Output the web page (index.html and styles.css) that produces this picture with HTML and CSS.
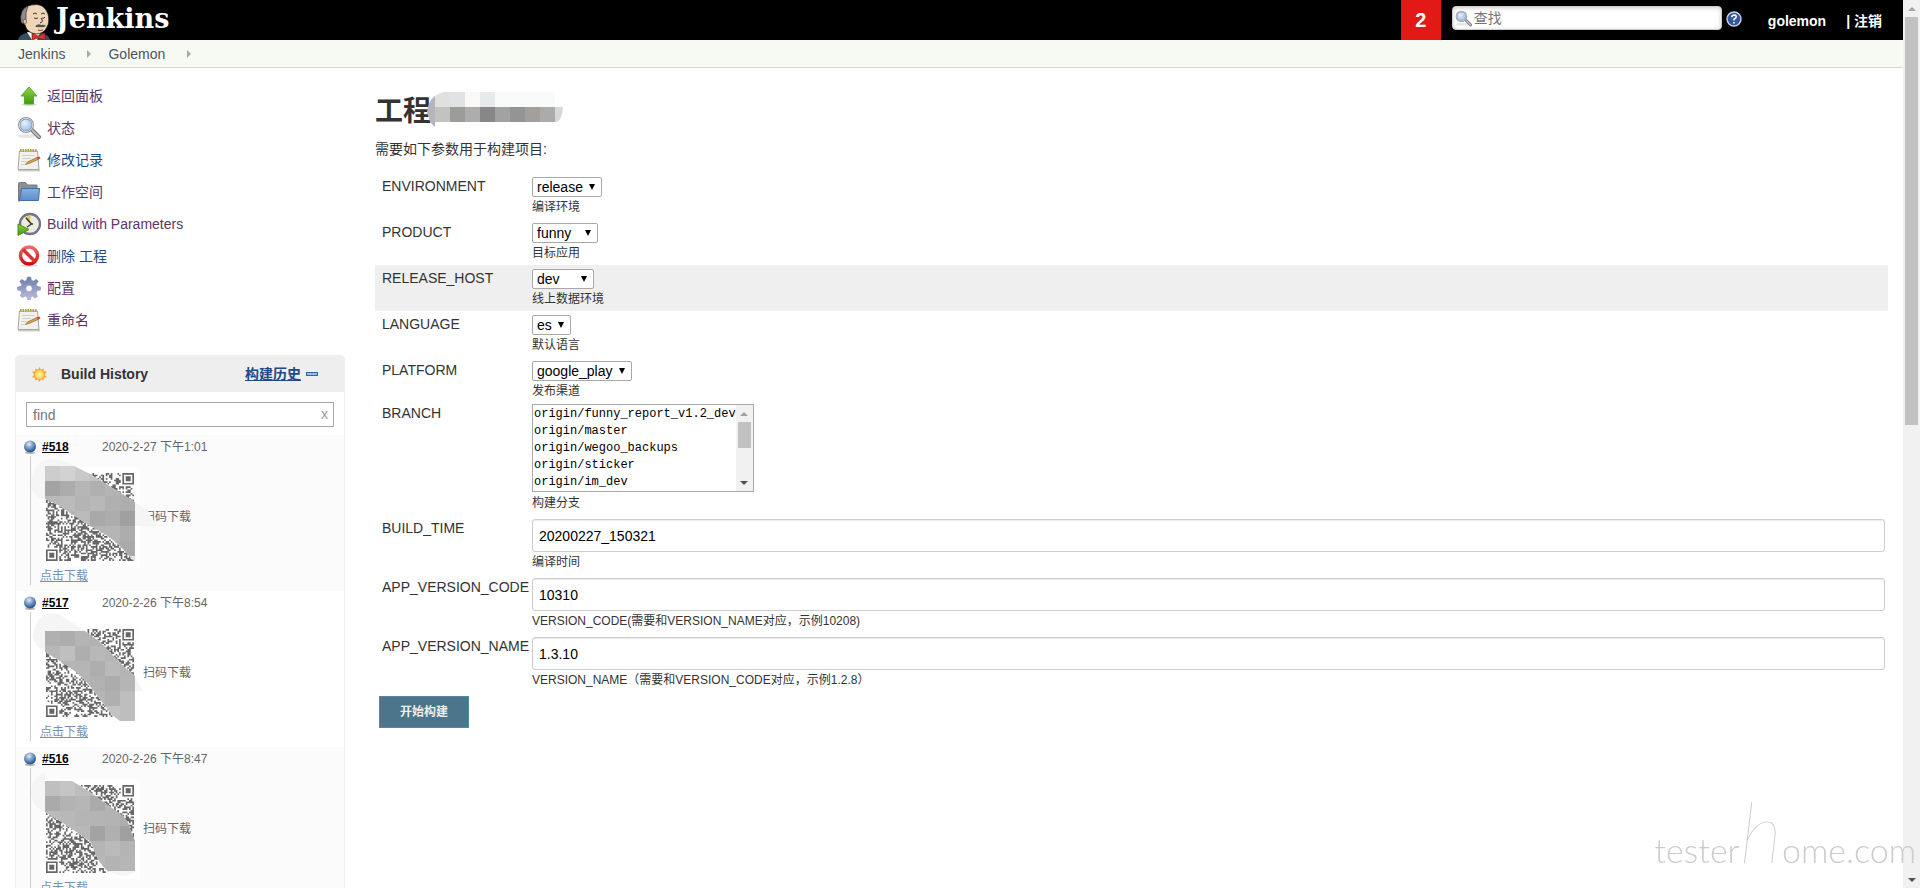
FILE: index.html
```html
<!DOCTYPE html>
<html lang="zh-Hans">
<head>
  <meta charset="UTF-8">
  <meta name="viewport" content="width=device-width, initial-scale=1.0">
  <title>Golemon [Jenkins]</title>
  <link rel="stylesheet" href="styles.css">
</head>
<body>
  <svg class="defs" aria-hidden="true">
    <defs>
      <linearGradient id="g-green" x1="0" y1="0" x2="0" y2="1"><stop offset="0" stop-color="#8fd44a"/><stop offset="1" stop-color="#3f9a06"/></linearGradient>
      <linearGradient id="g-blue" x1="0" y1="0" x2="0" y2="1"><stop offset="0" stop-color="#8ab1de"/><stop offset="1" stop-color="#5d8dc9"/></linearGradient>
      <linearGradient id="g-red" x1="0" y1="0" x2="0" y2="1"><stop offset="0" stop-color="#ef6b6b"/><stop offset="1" stop-color="#cc0c0c"/></linearGradient>
      <linearGradient id="g-gear" x1="0" y1="0" x2="0" y2="1"><stop offset="0" stop-color="#657ca6"/><stop offset="1" stop-color="#c0bbdf"/></linearGradient>
      <radialGradient id="g-lens" cx=".4" cy=".35" r=".7"><stop offset="0" stop-color="#e8f3ff"/><stop offset="1" stop-color="#8cb8e8"/></radialGradient>
      <radialGradient id="g-ball" cx=".42" cy=".3" r=".7"><stop offset="0" stop-color="#e4ebf2"/><stop offset=".45" stop-color="#7d9fc6"/><stop offset="1" stop-color="#1d4c8c"/></radialGradient>
      <radialGradient id="g-sun"><stop offset="0" stop-color="#fff7a0"/><stop offset="1" stop-color="#fcd34a"/></radialGradient>
    </defs>
    <symbol id="i-up" viewBox="0 0 24 24">
      <ellipse cx="12" cy="20.500" rx="8" ry="1.500" fill="#ddd"/>
      <path d="M12 3 20 12H16.500V20H7.500V12H4Z" fill="url(#g-green)" stroke="#5aa82a"/>
    </symbol>
    <symbol id="i-search" viewBox="0 0 24 24">
      <ellipse cx="10" cy="20" rx="9" ry="2" fill="#e6e6e6"/>
      <path d="M15 14 22 21" stroke="#777" stroke-width="4" stroke-linecap="round"/>
      <path d="M15 14 22 21" stroke="#bbb" stroke-width="2" stroke-linecap="round"/>
      <circle cx="9" cy="9" r="6.800" fill="url(#g-lens)" stroke="#8a929c" stroke-width="2.400"/>
      <circle cx="9" cy="9" r="6.700" fill="none" stroke="#d5dbe2"/>
    </symbol>
    <symbol id="i-note" viewBox="0 0 24 24">
      <path d="M1 22.500H23" stroke="#ccc" stroke-width="2"/>
      <path d="M2.500 3H20.500L22 21.500H1Z" fill="#f1f1ee" stroke="#a5a59e"/>
      <path d="M3 2.500H20" stroke="#b3a24a" stroke-width="3" stroke-dasharray="1.500 1"/>
      <path d="M5 7.500H18M5 10.500H14M4 13.500H10M4 16.500H8" stroke="#d0d0cd"/>
      <path d="M8.500 16.500 10.500 14 20 9.500 21 11.500 12 15.500Z" fill="#d8a34c" stroke="#8d6a25" stroke-width=".700"/>
      <path d="M19.500 9.500 22.500 8.500 23.500 10.500 20.800 11.500Z" fill="#e0412f"/>
    </symbol>
    <symbol id="i-folder" viewBox="0 0 24 24">
      <path d="M1.500 21V3.500Q1.500 2.500 2.500 2.500H8.500L10.500 5H20V10H4L3 21Z" fill="#8f8f8f" stroke="#7a7a7a"/>
      <path d="M4.500 8.500H22.500L21.500 20.500H2.500Z" fill="url(#g-blue)" stroke="#3f6ea9"/>
    </symbol>
    <symbol id="i-clock" viewBox="0 0 24 24">
      <circle cx="13" cy="12" r="10" fill="#ececdf" stroke="#74738c" stroke-width="2.400"/>
      <path d="M13 12 8 5.500Q10.500 4 13.500 4Z" fill="#d9c04a"/>
      <path d="M9 6 14.500 12 10 15M14 12H16" fill="none" stroke="#333" stroke-width="1.300"/>
      <path d="M1 12 12 17.500 1 23.500Z" fill="url(#g-green)" stroke="#468f18"/>
    </symbol>
    <symbol id="i-stop" viewBox="0 0 24 24">
      <ellipse cx="12" cy="21.500" rx="9" ry="1.500" fill="#ddd"/>
      <circle cx="12" cy="11.500" r="8.500" fill="#fff" stroke="url(#g-red)" stroke-width="3.400"/>
      <path d="M6 5.500 18 17.500" stroke="#dd3030" stroke-width="3.400"/>
    </symbol>
    <symbol id="i-gear" viewBox="0 0 24 24">
      <path fill="url(#g-gear)" stroke="#8c93bb" stroke-width=".600" fill-rule="evenodd" d="M10.300 1H13.700L14.400 4.300 16.500 5.100 19.300 3.200 21.300 5.500 19.300 8.300 20 10.300 23.500 11V14L20 14.700 19 17 20.500 20.500 18 22 15.500 20 14 20.500 13.400 23.500H10.600L10 20.500 8.200 20 5.500 21.500 3.300 20 4.800 17 4 14.700.500 14V11L4 10.300 4.700 8.300 2.700 5.500 4.700 3.200 7.500 5.100 9.600 4.300ZM12 9.300A3.200 3.200 0 1 0 12 15.700 3.200 3.200 0 1 0 12 9.300Z"/>
    </symbol>
    <symbol id="i-ball" viewBox="0 0 14 14">
      <ellipse cx="7" cy="12.500" rx="5" ry="1.500" fill="#bbb"/>
      <circle cx="7" cy="6.500" r="6" fill="url(#g-ball)"/>
    </symbol>
  </svg>

  <div class="page">
    <header class="header">
      <a class="logo" href="#">
        <svg class="butler" viewBox="0 0 32 36" aria-hidden="true">
          <path d="M0 36Q1 31 8 29L24 29Q31 31 32 36Z" fill="#335061"/>
          <path d="M9 28 14 36H19L22 29Z" fill="#fff"/>
          <path d="M5 17Q1 3 13 1 26-2 30 10 32 18 29 23 26 30 18 30 9 29 7 21Z" fill="#f0d6b7" stroke="#222" stroke-width=".800"/>
          <path d="M3 18Q1 6 10 2L8 9 8 17 5 20Z" fill="#8b8d90" stroke="#222" stroke-width=".600"/>
          <path d="M5 16Q8 14 8.500 18 8 21 6 20Z" fill="#e8c6a3" stroke="#222" stroke-width=".500"/>
          <path d="M15 10Q17 8 19 10M23 10Q25 8 27 10M16 14Q18 15 20 14M24 14Q26 15 27 13M23 14Q26 18 22 19" fill="none" stroke="#222" stroke-width=".900"/>
          <path d="M17 22Q21 19 23 21 26 20 28 22 25 24 22 23 19 24 17 22Z" fill="#555"/>
          <path d="M20 26Q22 27 25 26" fill="none" stroke="#7a3b2b"/>
          <path d="M14 29 20 32 27 29 27 36 20 34 14 36Z" fill="#d33833" stroke="#6d1313" stroke-width=".600"/>
        </svg>
        <span class="logo-text">Jenkins</span>
      </a>
      <a class="alert-count" href="#">2</a>
      <form class="search" role="search">
        <svg class="search-icon" aria-hidden="true"><use href="#i-search"/></svg>
        <input class="search-input" type="text" placeholder="查找" aria-label="查找">
      </form>
      <a class="help" href="#" aria-label="帮助">
        <svg viewBox="0 0 16 16" width="16" height="16">
          <circle cx="8" cy="8" r="7" fill="#34589c" stroke="#c8d3e6" stroke-width="1.400"/>
          <path d="M5.800 6.200Q6 4 8.200 4 10.300 4.200 10.200 6 10 7.300 8 8.200V9.500M8 10.900V12.500" fill="none" stroke="#fff" stroke-width="1.600"/>
        </svg>
      </a>
      <a class="user" href="#">golemon</a>
      <span class="logout">| <a href="#">注销</a></span>
    </header>

    <nav class="breadcrumb">
      <a href="#">Jenkins</a><span class="crumb-arrow"></span>
      <a href="#">Golemon</a><span class="crumb-arrow"></span>
    </nav>

    <div class="content">
      <aside class="sidebar">
        <nav class="tasks">
          <a class="task visited" href="#"><svg><use href="#i-up"/></svg>返回面板</a>
          <a class="task visited" href="#"><svg><use href="#i-search"/></svg>状态</a>
          <a class="task" href="#"><svg><use href="#i-note"/></svg>修改记录</a>
          <a class="task visited" href="#"><svg><use href="#i-folder"/></svg>工作空间</a>
          <a class="task visited" href="#"><svg><use href="#i-clock"/></svg>Build with Parameters</a>
          <a class="task" href="#"><svg><use href="#i-stop"/></svg>删除 工程</a>
          <a class="task visited" href="#"><svg><use href="#i-gear"/></svg>配置</a>
          <a class="task visited" href="#"><svg><use href="#i-note"/></svg>重命名</a>
        </nav>

        <section class="history">
          <div class="history-head">
            <svg class="sun" viewBox="0 0 16 16" aria-hidden="true">
              <path d="M8 0 9.500 3 12.500 1.500 12.500 4.500 16 5 13.500 8 16 11 12.500 11.500 12.500 14.500 9.500 13 8 16 6.500 13 3.500 14.500 3.500 11.500 0 11 2.500 8 0 5 3.500 4.500 3.500 1.500 6.500 3Z" fill="#f5a43c"/>
              <circle cx="8" cy="8" r="4.800" fill="url(#g-sun)"/>
            </svg>
            <strong>Build History</strong>
            <a class="trend" href="#">构建历史</a>
            <span class="collapse"></span>
          </div>
          <div class="find">
            <input class="find-input" type="text" placeholder="find" aria-label="find">
            <button class="find-clear" type="button">x</button>
          </div>

          <article class="build">
            <div class="build-head">
              <svg class="ball"><use href="#i-ball"/></svg>
              <a class="build-no" href="#">#518</a>
              <span>2020-2-27 下午1:01</span>
            </div>
            <div class="build-body">
              <div class="scan"><svg class="qr" viewBox="0 0 100 100" data-index="0"></svg>扫码下载</div>
              <a class="download" href="#">点击下载</a>
            </div>
          </article>
          <article class="build">
            <div class="build-head">
              <svg class="ball"><use href="#i-ball"/></svg>
              <a class="build-no" href="#">#517</a>
              <span>2020-2-26 下午8:54</span>
            </div>
            <div class="build-body">
              <div class="scan"><svg class="qr" viewBox="0 0 100 100" data-index="1"></svg>扫码下载</div>
              <a class="download" href="#">点击下载</a>
            </div>
          </article>
          <article class="build">
            <div class="build-head">
              <svg class="ball"><use href="#i-ball"/></svg>
              <a class="build-no" href="#">#516</a>
              <span>2020-2-26 下午8:47</span>
            </div>
            <div class="build-body">
              <div class="scan"><svg class="qr" viewBox="0 0 100 100" data-index="2"></svg>扫码下载</div>
              <a class="download" href="#">点击下载</a>
            </div>
          </article>
        </section>
      </aside>

      <main class="main">
        <h1 class="title">工程<svg class="title-mask" viewBox="0 0 136 36" aria-hidden="true">
          <clipPath id="mask-title"><path d="M0 20Q2 3 17 0H128V15H136Q135 28 130 30H8V35L3 30Z"/></clipPath>
          <g clip-path="url(#mask-title)">
            <path d="M0 0H8V36H0Z" fill="#b4b4bc"/>
            <path d="M8 0H23V15H8Z" fill="#e0e0de"/><path d="M23 0H38V15H23Z" fill="#e0e2e4"/><path d="M38 0H53V15H38Z" fill="#faf9f8"/><path d="M53 0H68V15H53Z" fill="#e7eaea"/><path d="M68 0H128V15H68Z" fill="#f9fafa"/>
            <path d="M8 15H23V30H8Z" fill="#c3c2c0"/><path d="M23 15H38V30H23Z" fill="#9d9c98"/><path d="M38 15H53V30H38Z" fill="#abaead"/><path d="M53 15H68V30H53Z" fill="#878787"/><path d="M68 15H83V30H68Z" fill="#a0a2a4"/><path d="M83 15H98V30H83Z" fill="#949494"/><path d="M98 15H113V30H98Z" fill="#a39f9b"/><path d="M113 15H128V30H113Z" fill="#adaaab"/><path d="M128 15H136V30H128Z" fill="#d5d8dd"/>
          </g>
        </svg></h1>
        <p class="intro">需要如下参数用于构建项目:</p>

        <form class="params" onsubmit="return false">
          <div class="param">
            <label for="environment">ENVIRONMENT</label>
            <div class="value">
              <span class="drop"><select id="environment"><option>release</option></select></span>
              <div class="desc">编译环境</div>
            </div>
          </div>
          <div class="param">
            <label for="product">PRODUCT</label>
            <div class="value">
              <span class="drop drop-funny"><select id="product"><option>funny</option></select></span>
              <div class="desc">目标应用</div>
            </div>
          </div>
          <div class="param hover">
            <label for="release-host">RELEASE_HOST</label>
            <div class="value">
              <span class="drop drop-dev"><select id="release-host"><option>dev</option></select></span>
              <div class="desc">线上数据环境</div>
            </div>
          </div>
          <div class="param">
            <label for="language">LANGUAGE</label>
            <div class="value">
              <span class="drop"><select id="language"><option>es</option></select></span>
              <div class="desc">默认语言</div>
            </div>
          </div>
          <div class="param">
            <label for="platform">PLATFORM</label>
            <div class="value">
              <span class="drop"><select id="platform"><option>google_play</option></select></span>
              <div class="desc">发布渠道</div>
            </div>
          </div>
          <div class="param wide">
            <label for="branch">BRANCH</label>
            <div class="value">
              <div class="listbox">
                <select id="branch" size="5">
                  <option>origin/funny_report_v1.2_dev</option>
                  <option>origin/master</option>
                  <option>origin/wegoo_backups</option>
                  <option>origin/sticker</option>
                  <option>origin/im_dev</option>
                </select>
                <div class="scrollbar"><i class="arrow-up"></i><i class="thumb thumb-short"></i><i class="arrow-down"></i></div>
              </div>
              <div class="desc">构建分支</div>
            </div>
          </div>
          <div class="param wide">
            <label for="build-time">BUILD_TIME</label>
            <div class="value">
              <input id="build-time" type="text" value="20200227_150321">
              <div class="desc">编译时间</div>
            </div>
          </div>
          <div class="param wide">
            <label for="version-code">APP_VERSION_CODE</label>
            <div class="value">
              <input id="version-code" type="text" value="10310">
              <div class="desc">VERSION_CODE(需要和VERSION_NAME对应，示例10208)</div>
            </div>
          </div>
          <div class="param wide">
            <label for="version-name">APP_VERSION_NAME</label>
            <div class="value">
              <input id="version-name" type="text" value="1.3.10">
              <div class="desc">VERSION_NAME（需要和VERSION_CODE对应，示例1.2.8）</div>
            </div>
          </div>
          <button class="btn-build" type="submit">开始构建</button>
        </form>
      </main>
    </div>
  </div>

  <div class="scrollbar"><i class="arrow-up"></i><i class="thumb"></i><i class="arrow-down"></i></div>
  <div class="watermark">tester<span class="tall">h</span>ome.com</div>

  <script src="qr.js"></script>
</body>
</html>
```
FILE: styles.css
```css
/***----BASIC----***/
* {
  box-sizing: border-box;
}
body {
  margin: 0;
  height: 100vh;
  overflow: hidden;
  display: flex;
  background: #fff;
  color: #333;
  font: 14px/18px "Liberation Sans", "Noto Sans CJK SC", sans-serif;
}
a {
  color: #204a87;
}
input,
select,
button {
  font: inherit;
  margin: 0;
}
.defs {
  position: absolute;
  width: 0;
  height: 0;
}
.page {
  flex: 1;
  min-width: 0;
  overflow: hidden;
}

/***----Header----***/
.header {
  display: flex;
  align-items: flex-start;
  height: 40px;
  padding-right: 21px;
  background: #000;
  color: #fff;
}
.header a {
  color: #fff;
  text-decoration: none;
}
.logo {
  display: flex;
  flex: 1;
  padding-left: 18px;
  gap: 6px;
}
.butler {
  width: 32px;
  height: 36px;
  margin-top: 4px;
}
.logo-text {
  font: bold 27px/38px "DejaVu Serif", serif;
}
.alert-count {
  width: 40px;
  background: #e31918;
  font-size: 20px;
  font-weight: bold;
  line-height: 40px;
  text-align: center;
}
.search {
  position: relative;
  margin: 6px 4px 0 11px;
}
.search-icon {
  position: absolute;
  left: 3px;
  top: 4px;
  width: 17px;
  height: 17px;
}
.search-input {
  display: block;
  width: 270px;
  height: 24px;
  padding: 0 4px 0 21px;
  border: 1px solid #ccc;
  border-radius: 4px;
  box-shadow: inset 0 1px 4px #ccc;
}
.search-input::placeholder,
.find-input::placeholder {
  color: #757575;
}
.help {
  margin-top: 11px;
  height: 16px;
}
.user,
.logout {
  margin-top: 12px;
  font-weight: bold;
}
.user {
  margin: 12px 20px 0 26px;
}

/***----Breadcrumb----***/
.breadcrumb {
  display: flex;
  align-items: center;
  height: 28px;
  padding-left: 18px;
  background: #f6faf2;
  border-bottom: 1px solid #d3d7cf;
}
.breadcrumb a {
  color: #4d545d;
  text-decoration: none;
}
.crumb-arrow {
  margin: 0 17px 0 22px;
  border: 4px solid transparent;
  border-left-color: #aaa;
  border-right: 0;
}

/***----Sidebar----***/
.content {
  display: flex;
  gap: 30px;
  padding: 12px 15px 0;
}
.sidebar {
  width: 330px;
  flex: none;
}
.task {
  display: flex;
  align-items: center;
  gap: 6px;
  height: 32px;
  padding-left: 2px;
  text-decoration: none;
}
.task svg {
  width: 24px;
  height: 24px;
}
.visited {
  color: #5c3566;
}
.history {
  margin-top: 19px;
  border: 1px solid #eee;
  border-radius: 4px 4px 0 0;
}
.history-head {
  display: flex;
  align-items: center;
  height: 36px;
  padding: 0 26px 0 16px;
  background: #eee;
}
.sun {
  width: 15px;
  height: 15px;
  margin-right: 14px;
}
.trend {
  margin: 0 5px 0 auto;
  font-weight: bold;
}
.collapse {
  width: 12px;
  height: 4px;
  border: 1px solid #3465a4;
  background: #9dbbe0;
}
.find {
  position: relative;
  padding: 10px 10px 8px;
}
.find-input {
  display: block;
  width: 100%;
  height: 25px;
  padding: 0 6px;
  border: 1px solid #a9a9a9;
}
.find-clear {
  position: absolute;
  right: 16px;
  top: 13px;
  padding: 0;
  border: 0;
  background: none;
  color: #999;
}
.build {
  height: 156px;
  padding: 0 7px;
  color: #666;
  font-size: 12px;
}
.build:nth-of-type(odd) {
  background: #fbfbfb;
}
.build-head {
  display: flex;
  align-items: center;
  height: 24px;
}
.ball {
  width: 14px;
  height: 14px;
}
.build-no {
  width: 60px;
  margin-left: 5px;
  color: #000;
  font-weight: bold;
}
.build-body {
  height: 129px;
  margin: -3px 0 0 7px;
  padding: 11px 0 0 9px;
  border-left: 1px solid #ccc;
}
.scan {
  display: flex;
  align-items: center;
  gap: 3px;
}
.qr {
  position: relative;
  width: 100px;
  height: 100px;
  overflow: visible;
}
.download {
  opacity: .6;
}

/***----Parameters----***/
.main {
  flex: 1;
  min-width: 0;
}
.title {
  display: flex;
  margin: 12px 0 0;
  font-size: 28px;
  line-height: 40px;
}
.title-mask {
  width: 136px;
  height: 36px;
  margin-left: -4px;
}
.intro {
  margin: 8px 0 15px;
}
.param {
  display: flex;
  padding: 4px 3px 2px 7px;
}
.param.hover {
  background: #efefef;
}
.param.wide {
  padding: 1px 3px 5px 7px;
}
.param label {
  width: 150px;
  flex: none;
}
.value {
  flex: 1;
}
.desc {
  font-size: 12px;
  line-height: 20px;
}
.drop {
  display: block;
  position: relative;
  width: fit-content;
}
/* 下拉箭头 */
.drop::after {
  content: "";
  position: absolute;
  right: 7px;
  top: 7px;
  border: 3px solid transparent;
  border-top: 6px solid #000;
  border-bottom: 0;
  pointer-events: none;
}
.drop select {
  appearance: none;
  display: block;
  width: 100%;
  height: 20px;
  padding: 0 18px 0 4px;
  border: 1px solid #a9a9a9;
  border-radius: 2px;
  background: #fff;
  color: #000;
}
.drop-funny {
  width: 66px;
}
.drop-dev {
  width: 62px;
}
.listbox {
  display: flex;
  width: fit-content;
  height: 88px;
  margin-bottom: 1px;
  border: 1px solid #a9a9a9;
}
.listbox select {
  height: 86px;
  padding: 1px 0 0;
  border: 0;
  overflow: hidden;
  background: #fff;
  color: #000;
  font: 12px/17px "Liberation Mono", "Noto Sans CJK SC", monospace;
}
.listbox option {
  height: 17px;
  min-height: 17px;
  padding: 1px 0 0 1px;
}
.value input {
  display: block;
  width: 100%;
  height: 33px;
  padding: 0 6px;
  border: 1px solid #ccc;
  border-radius: 3px;
  box-shadow: inset 0 1px 1px rgba(0, 0, 0, 0.08);
  color: #000;
}
.btn-build {
  width: 90px;
  height: 32px;
  margin: 1px 0 0 4px;
  border: 1px solid #5788a0;
  background: #4b758b;
  color: #eee;
  font-size: 12px;
  font-weight: bold;
}

/***----Scrollbar----***/
.scrollbar {
  display: flex;
  flex-direction: column;
  align-items: center;
  width: 17px;
  flex: none;
  background: #f1f1f1;
}
.arrow-up {
  margin: 7px 0 6px;
  border: 4px solid transparent;
  border-top: 0;
  border-bottom-color: #a3a3a3;
}
.arrow-down {
  margin: auto 0 6px;
  border: 4px solid transparent;
  border-bottom: 0;
  border-top-color: #505050;
}
.thumb {
  width: 13px;
  height: 46vh;
  background: #c1c1c1;
}
.thumb-short {
  height: 26px;
}

/***----Watermark----***/
.watermark {
  position: fixed;
  right: 4px;
  bottom: 8px;
  color: #ccc;
  font: 300 34px/60px Lato, cursive;
  pointer-events: none;
}
.tall {
  font-size: 84px;
  font-weight: 100;
  font-style: italic;
}
```
FILE: qr.js
```js
// 二维码和上面的马赛克
const SIZE = 53;
const CELL = 88 / SIZE;

const masks = [
  {
    top: -1,
    shape: 'M-9 18Q-8 0 2-6 14-10 28-4L50 7 95 35 108 44 112 51 118 59H95V95L80 79Q70 69 50 59L20 39 5 32Q-8 30-9 18Z',
    rows: [
      ['#ccc', '#d2d2d2', '#c9c9c9', '#c4c4c4', '#bbb', '#bbb'],
      ['#a3a3a3', '#acacac', '#b6b6b6', '#b0b0b0', '#b4b4b4', '#b0b0b0'],
      ['#b9b9b9', '#bababa', '#b4b4b4', '#b8b8b8', '#b0b0b0', '#adadad'],
      ['#bbb', '#b5b5b5', '#bababa', '#a9a9a9', '#adadad', '#a0a0a0'],
      ['#bbb', '#bbb', '#bbb', '#b4b4b4', '#b5b5b5', '#adadad'],
      ['#bbb', '#bbb', '#bbb', '#bbb', '#b3b3b3', '#aaa'],
      ['#eee', '#eee', '#eee', '#eee', '#eee', '#e2e2e2']
    ]
  },
  {
    top: 8,
    shape: 'M-7 13Q-6 0 2-7 12-13 22-7L42 6 60 19 83 43 95 53 103 68H95V98H80L72 92 50 63Q40 50 20 38L5 29Q-7 22-7 13Z',
    rows: [
      ['#b0b0b0', '#adadad', '#b4b4b4', '#b2b2b2', '#bbb', '#bbb'],
      ['#b7b7b7', '#bfbfbf', '#aeaeae', '#b8b8b8', '#b4b4b4', '#bbb'],
      ['#bbb', '#b5b5b5', '#b5b5b5', '#aeaeae', '#b9b9b9', '#b4b4b4'],
      ['#bbb', '#bbb', '#b5b5b5', '#b1b1b1', '#acacac', '#b5b5b5'],
      ['#bbb', '#bbb', '#bbb', '#b5b5b5', '#afafaf', '#bebebe'],
      ['#bbb', '#bbb', '#bbb', '#bbb', '#c2c2c2', '#bebebe']
    ]
  },
  {
    top: 2,
    shape: 'M-9 15Q-8-2 5-7V2H32L50 13 83 37Q90 45 90 50L95 62V92Q84 101 68 92 58 84 55 73L50 62 20 42 5 33Q-8 28-9 15Z',
    rows: [
      ['#bfbfbf', '#c5c5c5', '#bdbdbd', '#bbb', '#bbb', '#bbb'],
      ['#aaa', '#b3b3b3', '#b6b6b6', '#aaa', '#b4b4b4', '#b4b4b4'],
      ['#bbb', '#b8b8b8', '#b5b5b5', '#b4b4b4', '#b3b3b3', '#adadad'],
      ['#bbb', '#bbb', '#b8b8b8', '#a3a3a3', '#b0b0b0', '#a0a0a0'],
      ['#bbb', '#bbb', '#bbb', '#b4b4b4', '#bababa', '#b4b4b4'],
      ['#bbb', '#bbb', '#bbb', '#b8b8b8', '#b3b3b3', '#b6b6b6']
    ]
  }
];

// 三个定位角
function finder(x, y) {
  const corners = [[0, 0], [SIZE - 7, 0], [0, SIZE - 7]];
  for (const [cx, cy] of corners) {
    const dx = x - cx;
    const dy = y - cy;
    if (dx >= -1 && dx <= 7 && dy >= -1 && dy <= 7) {
      const d = Math.max(Math.abs(dx - 3), Math.abs(dy - 3));
      return d === 3 || d <= 1;
    }
  }
  return null;
}

document.querySelectorAll('.qr').forEach((svg) => {
  const i = Number(svg.dataset.index);
  let seed = 518 + i;
  let d = '';
  for (let y = 0; y < SIZE; y++) {
    for (let x = 0; x < SIZE; x++) {
      seed = (seed * 1103515245 + 12345) % 2147483648;
      const fixed = finder(x, y);
      const on = fixed === null ? (seed >> 16) % 2 === 0 : fixed;
      if (on) {
        d += `M${(6 + x * CELL).toFixed(2)} ${(6 + y * CELL).toFixed(2)}h${CELL}v${CELL}h-${CELL}z`;
      }
    }
  }

  const mask = masks[i];
  let tiles = '';
  mask.rows.forEach((row, r) => {
    row.forEach((color, c) => {
      tiles += `<rect x="${5 + c * 15}" y="${mask.top + r * 15}" width="15" height="15" fill="${color}"/>`;
    });
  });

  svg.innerHTML = `
    <rect width="100" height="100" fill="#fefefe"/>
    <path d="${d}" fill="#666"/>
    <clipPath id="mask-${i}"><path d="${mask.shape}"/></clipPath>
    <g clip-path="url(#mask-${i})">
      <rect x="-10" y="-15" width="130" height="120" fill="#f5f5f5"/>
      ${tiles}
    </g>`;
});
```
